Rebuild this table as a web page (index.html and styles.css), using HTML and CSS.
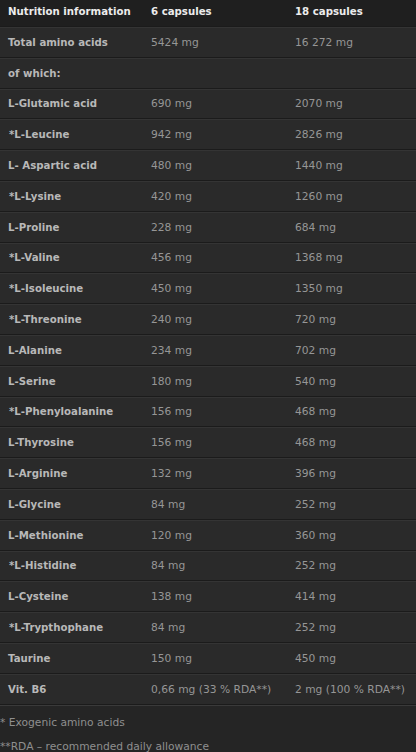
FILE: index.html
```html
<!DOCTYPE html>
<html>
<head>
<meta charset="utf-8">
<link rel="stylesheet" href="styles.css">
</head>
<body>
<div class="panel">
  <div class="row head">
    <div class="c1">Nutrition information</div>
    <div class="c2">6 capsules</div>
    <div class="c3">18 capsules</div>
  </div>
  <div class="row"><div class="c1">Total amino acids</div><div class="c2">5424 mg</div><div class="c3">16 272 mg</div></div>
  <div class="row"><div class="c1">of which:</div><div class="c2"></div><div class="c3"></div></div>
  <div class="row"><div class="c1">L-Glutamic acid</div><div class="c2">690 mg</div><div class="c3">2070 mg</div></div>
  <div class="row"><div class="c1 ex">*L-Leucine</div><div class="c2">942 mg</div><div class="c3">2826 mg</div></div>
  <div class="row"><div class="c1">L- Aspartic acid</div><div class="c2">480 mg</div><div class="c3">1440 mg</div></div>
  <div class="row"><div class="c1 ex">*L-Lysine</div><div class="c2">420 mg</div><div class="c3">1260 mg</div></div>
  <div class="row"><div class="c1">L-Proline</div><div class="c2">228 mg</div><div class="c3">684 mg</div></div>
  <div class="row"><div class="c1 ex">*L-Valine</div><div class="c2">456 mg</div><div class="c3">1368 mg</div></div>
  <div class="row"><div class="c1 ex">*L-Isoleucine</div><div class="c2">450 mg</div><div class="c3">1350 mg</div></div>
  <div class="row"><div class="c1 ex">*L-Threonine</div><div class="c2">240 mg</div><div class="c3">720 mg</div></div>
  <div class="row"><div class="c1">L-Alanine</div><div class="c2">234 mg</div><div class="c3">702 mg</div></div>
  <div class="row"><div class="c1">L-Serine</div><div class="c2">180 mg</div><div class="c3">540 mg</div></div>
  <div class="row"><div class="c1 ex">*L-Phenyloalanine</div><div class="c2">156 mg</div><div class="c3">468 mg</div></div>
  <div class="row"><div class="c1">L-Thyrosine</div><div class="c2">156 mg</div><div class="c3">468 mg</div></div>
  <div class="row"><div class="c1">L-Arginine</div><div class="c2">132 mg</div><div class="c3">396 mg</div></div>
  <div class="row"><div class="c1">L-Glycine</div><div class="c2">84 mg</div><div class="c3">252 mg</div></div>
  <div class="row"><div class="c1">L-Methionine</div><div class="c2">120 mg</div><div class="c3">360 mg</div></div>
  <div class="row"><div class="c1 ex">*L-Histidine</div><div class="c2">84 mg</div><div class="c3">252 mg</div></div>
  <div class="row"><div class="c1">L-Cysteine</div><div class="c2">138 mg</div><div class="c3">414 mg</div></div>
  <div class="row"><div class="c1 ex">*L-Trypthophane</div><div class="c2">84 mg</div><div class="c3">252 mg</div></div>
  <div class="row"><div class="c1">Taurine</div><div class="c2">150 mg</div><div class="c3">450 mg</div></div>
  <div class="row"><div class="c1">Vit. B6</div><div class="c2">0,66 mg (33 % RDA**)</div><div class="c3">2 mg (100 % RDA**)</div></div>
  <div class="notes">
    <p>* Exogenic amino acids</p>
    <p>**RDA – recommended daily allowance</p>
  </div>
</div>
</body>
</html>
```
FILE: styles.css
```css
html, body {
  margin: 0;
  padding: 0;
  background: #252525;
}
body {
  font-family: "DejaVu Sans", Verdana, sans-serif;
  width: 416px;
  height: 752px;
  overflow: hidden;
}
.panel {
  display: flex;
  flex-direction: column;
}
.row {
  display: grid;
  grid-template-columns: 143px 144px 1fr;
  align-items: center;
  height: 28.8px;
  background: #2a2a2a;
  border-top: 1px solid #343434;
  border-bottom: 1px solid #1b1b1b;
  white-space: nowrap;
}
.row.head {
  height: 23px;
  padding-bottom: 3px;
  background: #1f1f1f;
  border-top: none;
}
.row > div {
  padding-left: 8px;
}
.c1 {
  font-weight: bold;
  font-size: 10.2px;
  color: #b8b8b8;
}
.c1.ex {
  padding-left: 9px;
}
.c2, .c3 {
  font-size: 10.7px;
  color: #969696;
}
.head .c1, .head .c2, .head .c3 {
  font-weight: bold;
  font-size: 10.2px;
  color: #ececec;
}
.notes {
  border-top: 1px solid #3a3a3a;
  padding-top: 5px;
  background: #252525;
}
.notes p {
  margin: 0;
  line-height: 24px;
  font-size: 10.7px;
  color: #8f8f8f;
}
```
